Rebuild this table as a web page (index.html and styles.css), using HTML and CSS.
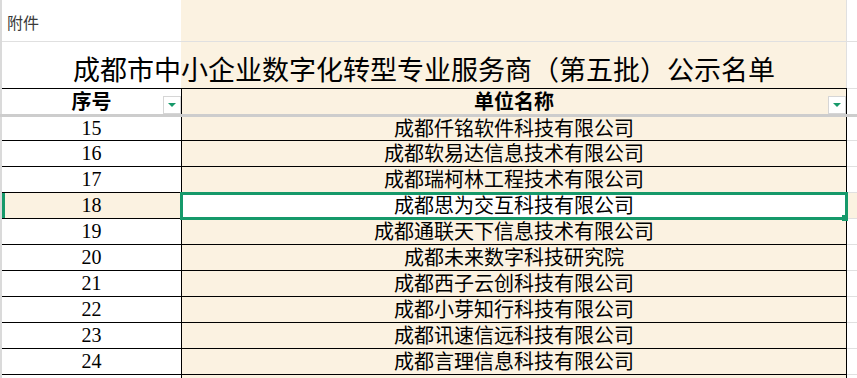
FILE: index.html
```html
<!DOCTYPE html>
<html lang="zh-CN">
<head>
<meta charset="utf-8">
<title>公示名单</title>
<link rel="stylesheet" href="styles.css">
</head>
<body>
<div class="sheet">
  <div class="row note-row">
    <div class="cell a note">附件</div>
    <div class="cell b"></div>
    <div class="cell c"></div>
  </div>
  <div class="row title-row">
    <div class="cell title">成都市中小企业数字化转型专业服务商（第五批）公示名单</div>
    <div class="cell c"></div>
  </div>
  <div class="row head-row">
    <div class="cell a">序号<span class="filter"></span></div>
    <div class="cell b">单位名称<span class="filter"></span></div>
    <div class="cell c"></div>
  </div>
  <div class="freeze"></div>
  <div class="row data first">
    <div class="cell a">15</div><div class="cell b">成都仟铭软件科技有限公司</div><div class="cell c"></div>
  </div>
  <div class="row data">
    <div class="cell a">16</div><div class="cell b">成都软易达信息技术有限公司</div><div class="cell c"></div>
  </div>
  <div class="row data">
    <div class="cell a">17</div><div class="cell b">成都瑞柯林工程技术有限公司</div><div class="cell c"></div>
  </div>
  <div class="row data sel">
    <div class="cell a">18</div><div class="cell b">成都思为交互科技有限公司</div><div class="cell c"></div>
  </div>
  <div class="row data">
    <div class="cell a">19</div><div class="cell b">成都通联天下信息技术有限公司</div><div class="cell c"></div>
  </div>
  <div class="row data">
    <div class="cell a">20</div><div class="cell b">成都未来数字科技研究院</div><div class="cell c"></div>
  </div>
  <div class="row data">
    <div class="cell a">21</div><div class="cell b">成都西子云创科技有限公司</div><div class="cell c"></div>
  </div>
  <div class="row data">
    <div class="cell a">22</div><div class="cell b">成都小芽知行科技有限公司</div><div class="cell c"></div>
  </div>
  <div class="row data">
    <div class="cell a">23</div><div class="cell b">成都讯速信远科技有限公司</div><div class="cell c"></div>
  </div>
  <div class="row data">
    <div class="cell a">24</div><div class="cell b">成都言理信息科技有限公司</div><div class="cell c"></div>
  </div>
  <div class="row tail">
    <div class="cell a"></div><div class="cell b"></div><div class="cell c"></div>
  </div>
</div>
</body>
</html>
```
FILE: styles.css
```css
html, body {
  margin: 0;
  padding: 0;
  background: #fff;
  overflow: hidden;
}
body {
  font-family: "Liberation Serif", "Noto Sans CJK SC", serif;
  color: #000;
}
.sheet {
  width: 857px;
  box-sizing: border-box;
  border-left: 2px solid #dadada;
}
.row {
  display: grid;
  grid-template-columns: 179px 666px 10px;
}
.cell {
  box-sizing: border-box;
  white-space: nowrap;
}
.b {
  background: #fbf2e1;
}

/* row 1 */
.note-row {
  height: 42px;
}
.note-row .cell {
  border-bottom: 1px solid #e0e0e0;
}
.note-row .b {
  border-right: 1px solid #e0e0e0;
}
.note {
  font-family: "Noto Sans CJK SC", sans-serif;
  font-size: 16px;
  line-height: 20px;
  padding: 12px 0 0 5px;
  color: #3a3a3a;
}

/* row 2 */
.title-row {
  height: 46px;
}
.title {
  grid-column: 1 / 3;
  background: linear-gradient(90deg, #fff 179px, #fbf2e1 179px);
  border-right: 1px solid #e0e0e0;
  text-align: center;
  font-family: "Noto Sans CJK SC", sans-serif;
  font-size: 27px;
  line-height: 28px;
  padding-top: 13px;
}

/* header */
.head-row {
  height: 26px;
}
.head-row .a,
.head-row .b {
  position: relative;
  border-top: 1px solid #000;
  font-weight: bold;
  font-size: 20px;
  line-height: 23px;
  padding-top: 2px;
  text-align: center;
}
.head-row .b {
  border-left: 1px solid #000;
  border-right: 1px solid #000;
}
.head-row .c {
  border-top: 1px solid #e0e0e0;
}
.filter {
  position: absolute;
  right: 0;
  bottom: 0;
  width: 18px;
  height: 18px;
  box-sizing: border-box;
  border: 1px solid #d6d6d6;
  background: #fff;
  display: flex;
  align-items: center;
  justify-content: center;
}
.filter::before {
  content: "";
  width: 0;
  height: 0;
  border-left: 4px solid transparent;
  border-right: 4px solid transparent;
  border-top: 4px solid #16996a;
}

.freeze {
  height: 3px;
  background: #cdcdcd;
  margin-left: -2px;
}

/* data rows */
.data {
  height: 26px;
  font-size: 20px;
  line-height: 25px;
  text-align: center;
}
.data.first {
  height: 24px;
  line-height: 23px;
}
.data .a {
  border-bottom: 1px solid #000;
}
.data .b {
  padding-top: 1px;
  line-height: 24px;
  border-left: 1px solid #000;
  border-right: 1px solid #000;
  border-bottom: 1px solid #000;
}
.data.first .b {
  line-height: 22px;
}
.data .c {
  border-bottom: 1px solid #e0e0e0;
}
.data.sel .a {
  background: #fbf2e1;
  box-shadow: inset 3px 0 0 #16996a;
}
.data.sel .b {
  background: #fff;
  position: relative;
  z-index: 1;
  outline: 3px solid #16996a;
  outline-offset: -2px;
}
.data.sel .b::after {
  content: "";
  position: absolute;
  right: -2px;
  bottom: -3px;
  width: 6px;
  height: 6px;
  background: #16996a;
}
.data.sel .c {
  background: #fbf2e1;
}

.tail {
  height: 4px;
}
.tail .b {
  border-left: 1px solid #000;
  border-right: 1px solid #000;
}
```
